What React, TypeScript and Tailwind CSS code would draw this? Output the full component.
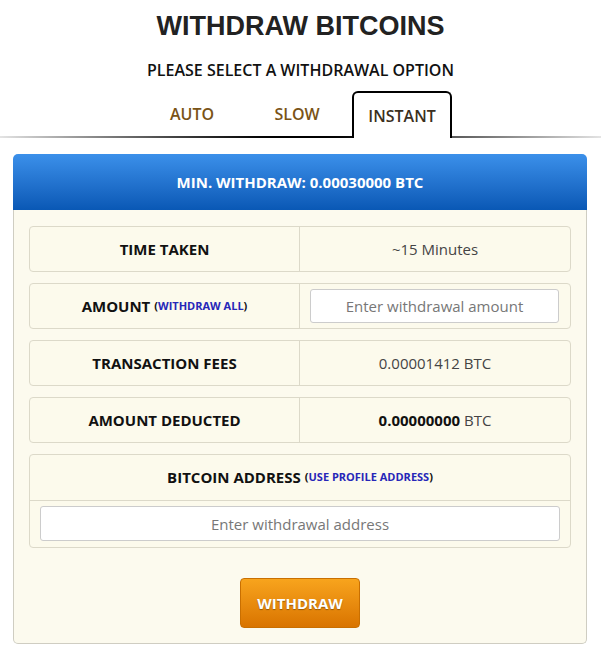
import { useState } from 'react';

const tabs = ['AUTO', 'SLOW', 'INSTANT'];

function InfoRow({ label, children }: { label: React.ReactNode; children: React.ReactNode }) {
  return (
    <div className="grid grid-cols-2 h-[46px] border border-[#dcd9c9] rounded-[4px] bg-[#fcfaec]">
      <div className="flex items-center justify-center text-[15px] font-bold text-[#111] border-r border-[#dcd9c9]">
        {label}
      </div>
      <div className="flex items-center justify-center text-[15px] text-[#444]">{children}</div>
    </div>
  );
}

export default function App() {
  const [active, setActive] = useState('INSTANT');

  return (
    <main className="min-h-screen bg-white pb-[9px]" style={{ fontFamily: '"Open Sans", sans-serif' }}>
      {/* Title */}
      <h1
        className="pt-[9px] text-center text-[27px] font-bold leading-[34px] text-[#222]"
        style={{ fontFamily: '"Liberation Sans", Arial, sans-serif' }}
      >
        WITHDRAW BITCOINS
      </h1>
      <p className="mt-[17px] text-center text-[16px] font-semibold leading-[20px] text-[#111]">
        PLEASE SELECT A WITHDRAWAL OPTION
      </p>

      {/* Tabs */}
      <div className="relative mt-[11px] h-[47px]">
        <div className="absolute left-0 right-0 bottom-0 h-[2px] bg-gradient-to-r from-[#e4e4e4] via-[#000] to-[#e4e4e4]" />
        <div className="relative flex justify-center gap-[5px] pr-[7px] h-full">
          {tabs.map((tab) => {
            const isActive = tab === active;
            return (
              <button
                key={tab}
                onClick={() => setActive(tab)}
                className={
                  isActive
                    ? 'w-[100px] h-[47px] border-2 border-b-0 border-black rounded-t-[6px] bg-white text-[16px] font-semibold text-[#3b2f20]'
                    : 'w-[100px] h-[45px] text-[16px] font-semibold text-[#7a5316]'
                }
              >
                {tab}
              </button>
            );
          })}
        </div>
      </div>

      {/* Panel */}
      <section className="ml-[13px] mt-[16px] w-[574px]">
        <div className="flex h-[56px] items-center justify-center rounded-t-[5px] bg-gradient-to-b from-[#3b90ea] to-[#0958b5] text-[15px] font-bold text-white">
          MIN. WITHDRAW: 0.00030000 BTC
        </div>
        <div className="flex flex-col gap-[11px] rounded-b-[5px] border border-t-0 border-[#cfcdc2] bg-[#fcfaee] px-[15px] pt-[16px] pb-[15px]">
          <InfoRow label="TIME TAKEN">~15 Minutes</InfoRow>
          <div className="grid grid-cols-2 h-[46px] border border-[#dcd9c9] rounded-[4px] bg-[#fcfaec]">
            <div className="flex items-center justify-center text-[15px] font-bold text-[#111] border-r border-[#dcd9c9]">
              AMOUNT
              <span className="ml-[4px] text-[11px] font-bold text-[#111]">
                (<a className="text-[#2626b8] cursor-pointer">WITHDRAW ALL</a>)
              </span>
            </div>
            <div className="flex items-center pl-[10px] pr-[11px]">
              <input
                placeholder="Enter withdrawal amount"
                className="h-[34px] w-full rounded-[3px] border border-[#cccccc] bg-white text-center text-[15px] text-[#444] placeholder:text-[#777] outline-none"
              />
            </div>
          </div>
          <InfoRow label="TRANSACTION FEES">0.00001412 BTC</InfoRow>
          <InfoRow label="AMOUNT DEDUCTED">
            <span className="font-bold text-[#111] mr-[4px]">0.00000000</span>BTC
          </InfoRow>

          {/* Address */}
          <div className="border border-[#dcd9c9] rounded-[4px] bg-[#fcfaec]">
            <div className="flex h-[46px] items-center justify-center border-b border-[#dcd9c9] text-[15px] font-bold text-[#111]">
              BITCOIN ADDRESS
              <span className="ml-[4px] text-[11px] font-bold text-[#111]">
                (<a className="text-[#2626b8] cursor-pointer">USE PROFILE ADDRESS</a>)
              </span>
            </div>
            <div className="px-[10px] pt-[5px] pb-[6px]">
              <input
                placeholder="Enter withdrawal address"
                className="h-[35px] w-full rounded-[3px] border border-[#cccccc] bg-white text-center text-[15px] text-[#444] placeholder:text-[#777] outline-none"
              />
            </div>
          </div>

          <div className="flex justify-center pt-[19px]">
            <button
              className="h-[50px] w-[120px] rounded-[4px] border border-[#c96f00] bg-gradient-to-b from-[#f8a41c] to-[#d97400] text-[15px] font-bold text-white"
              style={{ textShadow: '0 1px 1px rgba(0,0,0,0.35)' }}
            >
              WITHDRAW
            </button>
          </div>
        </div>
      </section>
    </main>
  );
}
